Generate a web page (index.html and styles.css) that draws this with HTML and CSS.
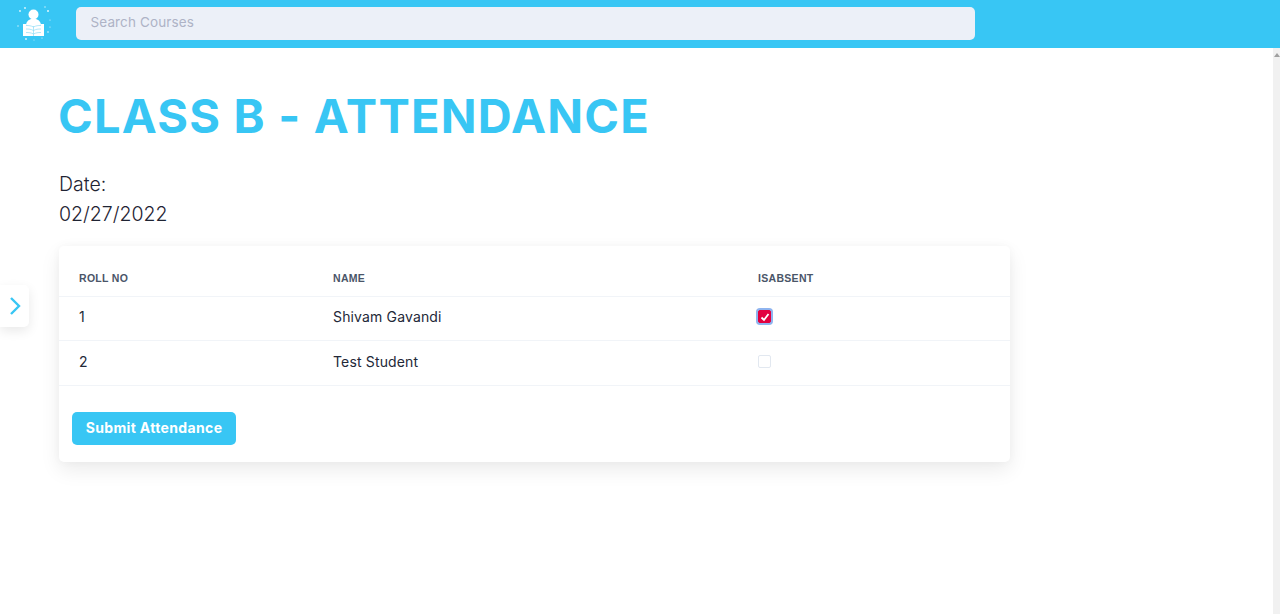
FILE: index.html
```html
<!DOCTYPE html>
<html lang="en">
<head>
<meta charset="utf-8">
<title>Class B - Attendance</title>
<link rel="stylesheet" href="styles.css">
</head>
<body>
<header class="topbar">
  <svg class="logo" viewBox="0 0 40 40" width="40" height="40" aria-hidden="true">
    <g class="logo-dots">
      <circle cx="11" cy="5" r=".9"/><circle cx="6" cy="8" r=".9"/><circle cx="31" cy="4" r=".7"/><circle cx="34" cy="8" r="1"/>
      <circle cx="36" cy="17" r=".6"/><circle cx="36" cy="24" r=".6"/><circle cx="4" cy="23" r=".7"/><circle cx="12" cy="36" r=".9"/>
      <circle cx="34" cy="29" r=".8"/><circle cx="28" cy="35" r=".6"/><circle cx="20" cy="37" r=".5"/>
    </g>
    <circle class="logo-fill" cx="19.500" cy="11.500" r="5"/>
    <path class="logo-fill" d="M12 33V23c0-4 2-6 5-7h5c3 1 5 3 5 7v10z"/>
    <path class="logo-fill" d="M9 21h3v12H9zM27 21h3v12h-3z"/>
    <path class="logo-line" d="M19.500 23v10M12 22.500c3 0 5 .2 7.500 1.500 2.500-1.300 4.500-1.500 7.500-1.500M12 26c3 0 5 .2 7.500 1.500 2.500-1.300 4.500-1.500 7.500-1.500M12 29.500c3 0 5 .2 7.500 1.500 2.500-1.300 4.500-1.500 7.500-1.500"/>
  </svg>
  <input class="search" type="text" placeholder="Search Courses">
</header>
<button class="side-toggle" type="button" aria-label="Open menu">
  <svg viewBox="0 0 12 20" width="12" height="20"><path d="M2 2l8 8-8 8"/></svg>
</button>
<main class="content">
  <h1 class="title">CLASS B - ATTENDANCE</h1>
  <p class="date">Date:<br>02/27/2022</p>
  <section class="card">
    <table class="table">
      <thead>
        <tr><th class="col-roll">ROLL NO</th><th class="col-name">NAME</th><th>ISABSENT</th></tr>
      </thead>
      <tbody>
        <tr><td>1</td><td>Shivam Gavandi</td><td><span class="check checked"><svg viewBox="0 0 12 12" width="12" height="12"><path d="M2.500 6.500l2.500 2.500 4.500-6"/></svg></span></td></tr>
        <tr><td>2</td><td>Test Student</td><td><span class="check"></span></td></tr>
      </tbody>
    </table>
    <button class="submit" type="button">Submit Attendance</button>
  </section>
</main>
<div class="scrollbar"><span class="arrow"></span></div>
</body>
</html>
```
FILE: styles.css
```css
* { box-sizing: border-box; }
html, body { margin: 0; height: 100%; overflow: hidden; }
body { font-family: "Inter", "Liberation Sans", sans-serif; background: #fff; color: #1a202c; }
.topbar { height: 48px; background: #38c6f4; display: flex; align-items: center; padding: 0 0 2px 14px; gap: 22px; }
.logo { flex: none; }
.logo-dots { fill: #fff; opacity: .85; }
.logo-fill { fill: #fff; }
.logo-line { fill: none; stroke: #8fdcf7; stroke-width: .7; }
.search { width: 899px; height: 33px; margin-left: -.5px; border: 0; border-radius: 5px; background: #ecf0f8; padding: 0 15px 2px; font: 13.500px "Inter", sans-serif; letter-spacing: .12px; color: #1a202c; outline: 0; }
.search::placeholder { color: #aeb3c6; opacity: 1; }
.side-toggle { position: absolute; left: 0; top: 285px; width: 29px; height: 42px; padding: 0; border: 0; border-radius: 0 5px 5px 0; background: #fff; box-shadow: 0 4px 12px rgba(0,0,0,.09); display: flex; align-items: center; justify-content: center; }
.side-toggle path { fill: none; stroke: #38c6f4; stroke-width: 2.400; }
.content { padding: 40px 0 0 59px; width: 1010px; }
.title { margin: 0 0 0 -1px; font-size: 47px; line-height: 56px; font-weight: 700; color: #38c6f4; letter-spacing: 1.2px; white-space: nowrap; }
.date { margin: 25px 0 0; font-size: 19.500px; line-height: 30px; color: #1f2433; font-weight: 300; }
.card { margin-top: 17px; height: 216px; background: #fff; border-radius: 5px; box-shadow: 0 8px 20px rgba(0,0,0,.08), 0 0 10px rgba(0,0,0,.03); display: flex; flex-direction: column; align-items: flex-start; }
.table { width: 100%; border-collapse: collapse; table-layout: fixed; }
.table th { height: 50px; padding: 14px 0 0; text-align: left; font: 700 10.500px "Liberation Sans", sans-serif; letter-spacing: .3px; color: #4a5568; border-bottom: 1px solid #f1f4f8; }
.table td { height: 44.500px; padding-bottom: 4px; font-size: 14px; font-weight: 400; letter-spacing: .15px; color: #232838; border-bottom: 1px solid #f1f4f8; }
.table th:first-child, .table td:first-child { padding-left: 20px; }
.table td:nth-child(2) { text-indent: -1px; }
.col-roll { width: 274px; }
.col-name { width: 425px; }
.check { display: block; width: 13px; height: 13px; margin-left: -1px; border: 1px solid #e2e8f0; border-radius: 2px; background: #fff; }
.checked { background: #e2003f; border-color: #e2003f; box-shadow: 0 0 0 2px #8fb4ef; display: flex; align-items: center; justify-content: center; }
.checked svg { flex: none; }
.checked path { fill: none; stroke: #fff; stroke-width: 1.800; }
.submit { margin: 26px 0 0 13px; width: 164px; height: 33px; padding: 0 0 2px; border: 0; border-radius: 5px; background: #38c6f4; color: #fff; font: 700 14px "Inter", sans-serif; letter-spacing: .35px; }
.scrollbar { position: absolute; right: 0; top: 48px; bottom: 0; width: 7px; background: #f1f1f1; }
.arrow { position: absolute; left: 1px; top: 5px; border: 3px solid transparent; border-top: 0; border-bottom: 4px solid #a0a0a0; }
```
